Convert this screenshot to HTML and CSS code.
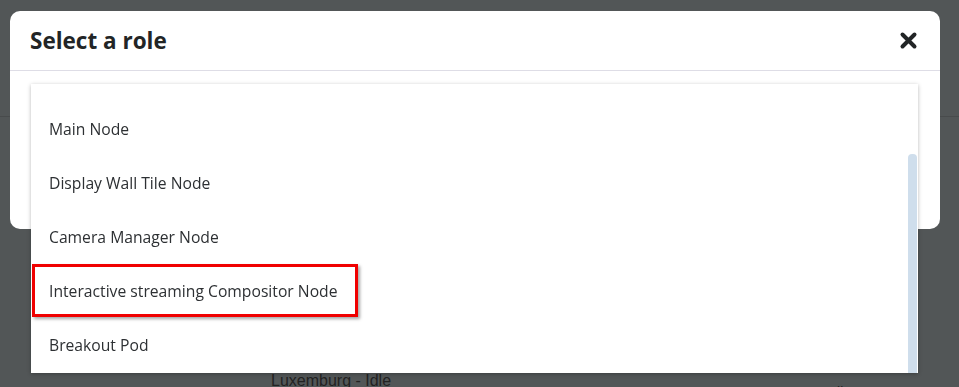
FILE: index.html
```html
<!DOCTYPE html>
<html lang="en">
<head>
    <meta charset="UTF-8">
    <meta name="viewport" content="width=device-width, initial-scale=1.0">
    <title>Select a role</title>
    <link rel="stylesheet" href="styles.css">
</head>
<body>
    <div class="page">
        <div class="topbar"></div>
        <div class="content">
            <span class="status">Luxemburg - Idle</span>
            <span class="status-right">ll</span>
        </div>
    </div>

    <div class="backdrop">
        <div class="modal">
            <div class="modal-header">
                <h2 class="modal-title">Select a role</h2>
                <button class="close" aria-label="Close">
                    <svg width="19" height="19" viewBox="0 0 19 19">
                        <path d="M3.5 3.5 L15.5 15.5 M15.5 3.5 L3.5 15.5" stroke="#222526" stroke-width="4" stroke-linecap="round" fill="none"/>
                    </svg>
                </button>
            </div>
            <div class="modal-body"></div>

            <div class="dropdown">
                <ul class="options">
                    <li>Main Node</li>
                    <li>Display Wall Tile Node</li>
                    <li>Camera Manager Node</li>
                    <li class="marked">Interactive streaming Compositor Node</li>
                    <li>Breakout Pod</li>
                </ul>
                <div class="thumb"></div>
            </div>
        </div>
    </div>
</body>
</html>
```

FILE: styles.css
```css
body {
    margin: 0;
    background-color: #525657;
    font-family: "Open Sans", sans-serif;
    height: 387px;
    overflow: hidden;
}
.topbar {
    height: 116px;
    border-bottom: 1px solid #484b4c;
}
.content {
    display: flex;
    padding-top: 255px;
    padding-left: 271px;
    font-family: "Liberation Sans", Arial, sans-serif;
    font-size: 16px;
    color: #222;
}
.status-right {
    margin-left: 446px;
    padding-top: 12px;
    font-size: 14px;
}
.backdrop {
    position: fixed;
    top: 0;
    left: 0;
    right: 0;
    bottom: 0;
    padding: 11px 0 0 10px;
}
.modal {
    position: relative;
    width: 930px;
    background-color: #fff;
    border-radius: 10px;
}
.modal-header {
    height: 59px;
    padding: 0 22px 0 20px;
    display: flex;
    align-items: center;
    justify-content: space-between;
    border-bottom: 1px solid #dedde6;
}
.modal-title {
    margin: 0;
    font-size: 22.5px;
    font-weight: 700;
    color: #222526;
}
.close {
    background: none;
    border: none;
    padding: 0;
    width: 19px;
    height: 19px;
    cursor: pointer;
}
.modal-body {
    height: 158px;
}
.dropdown {
    position: absolute;
    left: 21px;
    top: 73px;
    width: 887px;
    height: 289px;
    background-color: #fff;
    box-shadow: 0 1px 4px rgba(0, 0, 0, 0.28);
    overflow: hidden;
}
.options {
    list-style: none;
    margin: 0;
    padding: 18px 0 0;
}
.options li {
    position: relative;
    height: 54px;
    line-height: 54px;
    padding-left: 18px;
    font-size: 15.7px;
    color: #2d3033;
}
.options li.marked::after {
    content: "";
    position: absolute;
    left: 1px;
    top: 0;
    width: 326px;
    height: 53px;
    box-sizing: border-box;
    border: 3px solid #f00000;
    box-shadow: 2px 2px 3px rgba(0, 0, 0, 0.35);
}
.thumb {
    position: absolute;
    right: 1px;
    top: 70px;
    bottom: 0;
    width: 9px;
    background-color: #cfdeec;
    border-radius: 4px 4px 0 0;
}
```
